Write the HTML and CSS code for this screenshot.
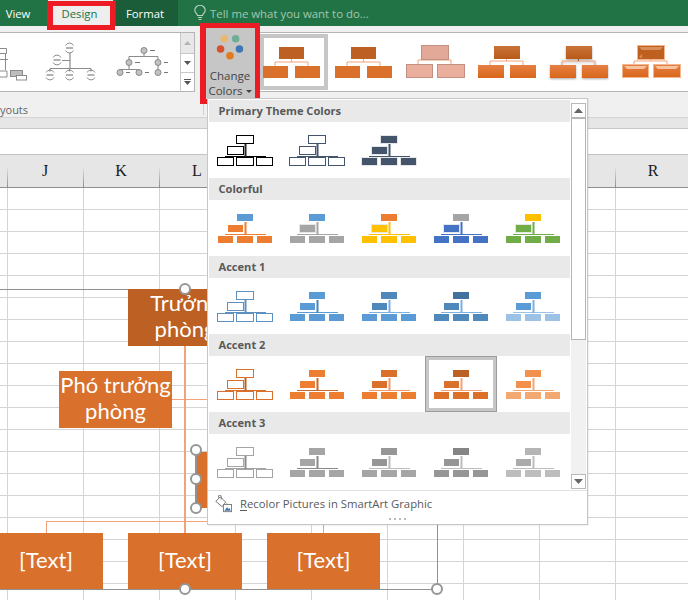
FILE: index.html
```html
<!DOCTYPE html>
<html lang="en">
<head>
<meta charset="utf-8">
<title>SmartArt Change Colors</title>
<link rel="stylesheet" href="styles.css">
</head>
<body>
<svg class="defs" width="0" height="0" aria-hidden="true">
  <symbol id="org" viewBox="0 0 56 31">
    <rect class="o-line" x="8" y="21" width="41" height="1"/>
    <rect class="o-vert" x="27.5" y="9" width="2" height="13"/>
    <rect class="o-top" x="19.5" y=".5" width="17" height="8"/>
    <rect class="o-asst" x="10.5" y="11.5" width="16" height="8"/>
    <rect class="o-bot" x=".5" y="22.5" width="16" height="8"/>
    <rect class="o-bot" x="19.5" y="22.5" width="17" height="8"/>
    <rect class="o-bot" x="39.5" y="22.5" width="16" height="8"/>
  </symbol>
  <linearGradient id="gTop" x1="0" y1="0" x2="0" y2="1"><stop offset="0" stop-color="#c9733a"/><stop offset="1" stop-color="#b85a18"/></linearGradient>
  <linearGradient id="gBot" x1="0" y1="0" x2="0" y2="1"><stop offset="0" stop-color="#e58044"/><stop offset="1" stop-color="#d9661a"/></linearGradient>
</svg>

<div class="app">
  <div class="tabbar">
    <span class="tab">View</span>
    <span class="tab tab-design">Design</span>
    <span class="tab tab-format">Format</span>
    <div class="tellme">
      <svg class="bulb" width="12" height="16" viewBox="0 0 12 16"><path d="M3.500 10.500C3 8.500 .8 7.800 .8 5.300a5.200 5 0 0 1 10.400 0c0 2.500-2.200 3.200-2.700 5.200zM4 12.500h4M4.500 14.500h3" fill="none" stroke="#b9d3c4" stroke-width="1.100"/></svg>
      <span>Tell me what you want to do...</span>
    </div>
  </div>

  <div class="ribbon">
    <div class="ribbon-row">
      <div class="layouts">
        <svg class="layout-art" width="180" height="58" viewBox="0 33 180 58">
          <g fill="none" stroke="#8c8c8c">
            <path d="M0 48.500h6.500v5H0M0 59.500h8M5.500 54v16M0 71h7v6H0"/>
            <rect x="10.500" y="70.500" width="12" height="6" fill="#bdbdbd"/>
            <rect x="16.500" y="75.500" width="10" height="4.500" fill="#fff"/>
            <path d="M70 53v15M50 68.500h41M50 68.500v3M69.500 68.500v3M91 68.500v3M62 60.500h8" stroke-width="1.200"/>
            <path d="M65.500 45.500a4.500 4.500 0 0 1 8 0M65.500 50.500a4.500 4.500 0 0 0 8 0M53 57.500a4.500 4.500 0 0 1 8 0M53 62.500a4.500 4.500 0 0 0 8 0M46 72.500a4.500 4.500 0 0 1 8 0M46 77.500a4.500 4.500 0 0 0 8 0M65.500 72.500a4.500 4.500 0 0 1 8 0M65.500 77.500a4.500 4.500 0 0 0 8 0M87 72.500a4.500 4.500 0 0 1 8 0M87 77.500a4.500 4.500 0 0 0 8 0"/>
            <path d="M66 48h7M53.500 60h7M46.500 75h7M66 75h7M87.500 75h7" stroke="#666"/>
            <path d="M144 54v2.500M129 56.500h29M129 56.500v3M158 56.500v3M129 65v4M120 69.500h19M120 69.500v1M139 69.500v1M158 65v5" stroke="#8c8c8c" stroke-width="1.100"/>
            <path d="M150 50.500h5M135 62.500h5M164 62.500h4M126 72.500h4M145 72.500h4M164 72.500h4" stroke="#777"/>
          </g>
          <g fill="#c2c2c2" stroke="#888">
            <circle cx="144" cy="50.500" r="3"/><circle cx="129" cy="62.500" r="3"/><circle cx="158" cy="62.500" r="3"/>
            <circle cx="120" cy="72.500" r="3"/><circle cx="139" cy="72.500" r="3"/><circle cx="158" cy="72.500" r="3"/>
          </g>
        </svg>
        <div class="gallery-scroll">
          <span class="gs-btn gs-up"><svg width="7" height="4"><path d="M0 4h7L3.500 0z" fill="#b5b5b5"/></svg></span>
          <span class="gs-btn"><svg width="7" height="4"><path d="M0 0h7L3.500 4z" fill="#555"/></svg></span>
          <span class="gs-btn gs-more"><svg width="7" height="6"><path d="M0 0h7v1H0zM0 2h7L3.500 6z" fill="#555"/></svg></span>
        </div>
      </div>
      <div class="change-colors">
        <svg width="32" height="36" viewBox="0 0 32 36">
          <circle cx="10" cy="6" r="4" fill="#e9b86d"/><circle cx="22" cy="6" r="4" fill="#70ad94"/>
          <circle cx="6" cy="17" r="4" fill="#d5522f"/><circle cx="26" cy="17" r="4" fill="#4176b4"/>
          <circle cx="16" cy="24" r="4" fill="#e27a1e"/>
        </svg>
        <span class="cc-label">Change</span>
        <span class="cc-label">Colors <i class="caret"></i></span>
      </div>
      <div class="styles">
        <svg class="style" width="72" height="58" viewBox="0 0 72 58"><rect x="2" y="3" width="64" height="52" fill="none" stroke="#c6c6c6" stroke-width="4"/><path class="peach" d="M15 34v-5h33v5M31.500 29v-3"/><rect x="19" y="14" width="25" height="12" fill="#bc6123"/><rect x="3" y="33" width="25" height="12" fill="#d9702c"/><rect x="35" y="33" width="25" height="12" fill="#d9702c"/></svg>
        <svg class="style" width="72" height="58" viewBox="0 0 72 58"><path class="peach" d="M15 34v-5h33v5M31.500 29v-3"/><rect x="19" y="14" width="25" height="12" fill="#bc6123"/><rect x="3" y="33" width="25" height="12" fill="#d9702c"/><rect x="35" y="33" width="25" height="12" fill="#d9702c"/></svg>
        <svg class="style" width="72" height="58" viewBox="1 0 72 58"><path class="peach" d="M15 32v-5h33v5M31.500 27v-3"/><rect x="18.500" y="12.500" width="27" height="14" fill="#e2a999" stroke="#c19083"/><rect x="3.500" y="31.500" width="26" height="13" fill="#eab09d" stroke="#c19083"/><rect x="34.500" y="31.500" width="27" height="13" fill="#eab09d" stroke="#c19083"/></svg>
        <svg class="style" width="72" height="58" viewBox="1 0 72 58"><path class="peach" d="M15 33v-5h33v5M31.500 28v-3"/><rect x="19" y="13" width="26" height="13" fill="url(#gTop)"/><rect x="3" y="32" width="26" height="13" fill="url(#gBot)"/><rect x="35" y="32" width="26" height="13" fill="url(#gBot)"/></svg>
        <svg class="style shadowed" width="72" height="58" viewBox="1 0 72 58"><path class="peach" d="M15 33v-5h33v5"/><path d="M31.500 28v-3" stroke="#9a5a30" fill="none"/><rect x="19" y="13" width="26" height="13" fill="url(#gTop)"/><rect x="3" y="32" width="26" height="13" fill="url(#gBot)"/><rect x="35" y="32" width="26" height="13" fill="url(#gBot)"/></svg>
        <svg class="style" width="72" height="58" viewBox="1 0 72 58"><path class="peach" d="M15 32v-4h33v4M31.500 28v-2"/><rect x="18.500" y="12.500" width="27" height="14" fill="#bd6020" stroke="#f3b68f"/><path d="M20 14h24l-3 3H23zM20 24l3-3v4z" fill="#d98e5c"/><rect x="3.500" y="31.500" width="26" height="13" fill="url(#gBot)" stroke="#f3b68f"/><path d="M5 33h23l-3 3H8z" fill="#f5c3a0"/><rect x="34.500" y="31.500" width="27" height="13" fill="url(#gBot)" stroke="#f3b68f"/><path d="M36 33h24l-3 3H39z" fill="#f5c3a0"/></svg>
      </div>
    </div>
    <div class="ribbon-foot"><span class="group-name">youts</span><span class="group-sep"></span></div>
  </div>

  <div class="band"></div>
  <div class="formula"></div>

  <div class="col-heads">
    <span class="col">J</span><span class="col">K</span><span class="col">L</span><span class="col">M</span><span class="col">N</span><span class="col">O</span><span class="col">P</span><span class="col">Q</span><span class="col">R</span>
  </div>

  <div class="sheet">
    <div class="sel-top"></div>
    <div class="sel-bottom"></div>
    <div class="sel-right"></div>
    <div class="sel-left"></div>
    <div class="conn conn-v1"></div>
    <div class="conn conn-h1"></div>
    <div class="conn conn-h2"></div>
    <div class="conn conn-d1"></div>
    <div class="conn conn-d2"></div>
    <div class="node node-head"><span>Trưởng<br>phòng</span></div>
    <div class="node node-deputy"><span>Phó trưởng<br>phòng</span></div>
    <div class="node node-asst"></div>
    <div class="node node-b1">[Text]</div>
    <div class="node node-b2">[Text]</div>
    <div class="node node-b3">[Text]</div>
    <i class="handle h-a"></i><i class="handle h-b"></i><i class="handle h-f"></i><i class="handle h-c"></i><i class="handle h-d"></i><i class="handle h-e"></i>
  </div>

  <span class="mark mark-design"></span>
  <span class="mark mark-colors"></span>

  <div class="panel">
    <div class="panel-main">
      <div class="list">
        <div class="sec-title">Primary Theme Colors</div>
        <div class="sec-row">
          <svg class="ic pt1"><use href="#org"/></svg>
          <svg class="ic pt2"><use href="#org"/></svg>
          <svg class="ic pt3"><use href="#org"/></svg>
        </div>
        <div class="sec-title">Colorful</div>
        <div class="sec-row">
          <svg class="ic c1"><use href="#org"/></svg>
          <svg class="ic c2"><use href="#org"/></svg>
          <svg class="ic c3"><use href="#org"/></svg>
          <svg class="ic c4"><use href="#org"/></svg>
          <svg class="ic c5"><use href="#org"/></svg>
        </div>
        <div class="sec-title">Accent 1</div>
        <div class="sec-row">
          <svg class="ic a11"><use href="#org"/></svg>
          <svg class="ic a12"><use href="#org"/></svg>
          <svg class="ic a13"><use href="#org"/></svg>
          <svg class="ic a14"><use href="#org"/></svg>
          <svg class="ic a15"><use href="#org"/></svg>
        </div>
        <div class="sec-title">Accent 2</div>
        <div class="sec-row">
          <svg class="ic a21"><use href="#org"/></svg>
          <svg class="ic a22"><use href="#org"/></svg>
          <svg class="ic a23"><use href="#org"/></svg>
          <div class="picked"><svg class="ic a24"><use href="#org"/></svg></div>
          <svg class="ic a25"><use href="#org"/></svg>
        </div>
        <div class="sec-title">Accent 3</div>
        <div class="sec-row">
          <svg class="ic a31"><use href="#org"/></svg>
          <svg class="ic a32"><use href="#org"/></svg>
          <svg class="ic a33"><use href="#org"/></svg>
          <svg class="ic a34"><use href="#org"/></svg>
          <svg class="ic a35"><use href="#org"/></svg>
        </div>
      </div>
      <div class="vscroll">
        <span class="vs-btn"><svg width="9" height="5"><path d="M0 5h9L4.500 0z" fill="#666"/></svg></span>
        <span class="vs-thumb"></span>
        <span class="vs-track"></span>
        <span class="vs-btn vs-btn-down"><svg width="9" height="5"><path d="M0 0h9L4.500 5z" fill="#666"/></svg></span>
      </div>
    </div>
    <div class="recolor">
      <svg width="18" height="18" viewBox="0 0 20 20">
        <path d="M2 7l5-5 6 6-4 5z" fill="#fff" stroke="#666"/>
        <path d="M5 3V1.500a1.500 1.500 0 0 1 3 0V5" fill="none" stroke="#666"/>
        <path d="M14 9c1 1.500 1.500 2 1.500 3" fill="none" stroke="#c99a4a"/>
        <rect x="10.500" y="10.500" width="9" height="8" fill="#fff" stroke="#777"/>
        <path d="M11.500 17.500l3-4 2 2 1-1 1 3z" fill="#3f78b5"/>
      </svg>
      <span><u>R</u>ecolor Pictures in SmartArt Graphic</span>
    </div>
    <div class="grip"><i></i><i></i><i></i><i></i></div>
  </div>
</div>
</body>
</html>
```
FILE: styles.css
```css
* { box-sizing: border-box; }
html, body { margin: 0; padding: 0; }
body { font-family: "Open Sans", "Liberation Sans", sans-serif; background: #fff; }
.defs { position: absolute; }

.app { position: relative; width: 688px; height: 600px; overflow: hidden; display: flex; flex-direction: column; }

/* title tabs */
.tabbar { flex: none; height: 26px; background: #217346; display: flex; align-items: stretch; font-size: 11.300px; color: #fff; }
.tab { display: flex; align-items: center; justify-content: center; }
.tab:first-child { width: 36px; }
.tab-design { width: 65px; margin-left: 12px; padding-right: 2px; background: #eeeeee; color: #217346; }
.tab-format { width: 62px; margin-left: 3px; padding-right: 4px; background: #1b5c39; }
.tellme { display: flex; align-items: center; gap: 4px; margin-left: 16px; color: #a4c6b1; font-size: 11.400px; }

/* ribbon */
.ribbon { flex: none; height: 92px; background: #f0f0f0; border-bottom: 1px solid #d4d4d4; display: flex; flex-direction: column; }
.ribbon-row { display: flex; height: 66px; padding-top: 6px; }
.layouts { width: 195px; height: 60px; display: flex; background: #fff; border: solid #b4b4b4; border-width: 1px 1px 1px 0; }
.layout-art { flex: none; }
.gallery-scroll { flex: none; width: 14px; display: flex; flex-direction: column; border-left: 1px solid #c8c8c8; }
.gs-btn { flex: 1; display: flex; align-items: center; justify-content: center; border-bottom: 1px solid #c8c8c8; background: #fff; }
.gs-btn:last-child { border-bottom: 0; }
.gs-up { background: #e8e8e8; flex: 1.150; }
.change-colors { flex: none; width: 50px; height: 70px; margin: -4px 0 0 10px; background: #c6c6c6; display: flex; flex-direction: column; align-items: center; color: #444; font-size: 11.500px; line-height: 15px; padding-top: 5px; }
.change-colors svg { margin-bottom: 1px; }
.cc-label { white-space: nowrap; }
.caret { display: inline-block; vertical-align: middle; width: 0; height: 0; border: 3px solid transparent; border-top-color: #444; border-bottom: 0; }
.styles { flex: 1; margin-left: 5px; height: 60px; display: flex; background: #fff; border: solid #b4b4b4; border-width: 1px 0; overflow: hidden; }
.style { flex: none; }
.shadowed { filter: drop-shadow(0 1px 1px rgba(60, 60, 60, .45)); }
.peach { fill: none; stroke: #f4a27b; stroke-width: 1; }
.ribbon-foot { flex: 1; display: flex; align-items: flex-start; justify-content: space-between; padding-top: 10px; width: 204px; }
.group-name { font-size: 11px; line-height: 15px; color: #666; }
.group-sep { width: 1px; height: 15px; margin-top: -2px; background: #d0d0d0; }

.band { flex: none; height: 11px; background: #e6e6e6; border-bottom: 1px solid #c8c8c8; }
.formula { flex: none; height: 26px; background: #fff; border-bottom: 1px solid #c4c4c4; }

/* sheet */
.col-heads { flex: none; height: 32px; padding-left: 7px; background: #e6e6e6; display: flex; }
.col { flex: none; width: 76px; display: flex; align-items: center; justify-content: center; font: 16px/1 "Liberation Serif", serif; color: #1a1a1a; background: linear-gradient(to bottom, #e6e6e6, #8f8f8f) left bottom / 1px 21px no-repeat; }
.sheet { flex: 1; position: relative; background-color: #fff;
  background-image: linear-gradient(to right, #d4d4d4 1px, transparent 1px), linear-gradient(to bottom, #d4d4d4 1px, transparent 1px);
  background-size: 76px 22px; background-position: 7px 0; }
.sheet::before { content: ""; position: absolute; left: 0; right: 0; top: 0; height: 1px; background: #8f8f8f; }

/* diagram canvas: y values relative to sheet top (187) */
.sel-top { position: absolute; left: 0; top: 102px; width: 300px; height: 1px; background: #919191; }
.sel-bottom { position: absolute; left: 0; top: 402px; width: 437px; height: 1px; background: #919191; }
.sel-right { position: absolute; left: 437px; top: 300px; width: 1px; height: 102px; background: #919191; }
.sel-left { position: absolute; left: 195px; top: 263px; width: 2px; height: 58px; background: #919191; }
.conn { position: absolute; background: #f2a27c; }
.conn-v1 { left: 184px; top: 159px; width: 2px; height: 188px; }
.conn-h1 { left: 46px; top: 334px; width: 280px; height: 1px; }
.conn-h2 { left: 172px; top: 212px; width: 40px; height: 1px; }
.conn-d1 { left: 46px; top: 334px; width: 1px; height: 12px; }
.conn-d2 { left: 323px; top: 334px; width: 1px; height: 12px; }
.node { position: absolute; display: flex; align-items: center; justify-content: center; padding-bottom: 3px; background: #d9702c; color: #fff; font-family: Lato, "Open Sans", sans-serif; font-size: 22px; line-height: 26px; text-align: center; }
.node-head { left: 128px; top: 102px; width: 114px; height: 57px; background: #bc6123; }
.node-deputy { left: 59px; top: 184px; width: 113px; height: 57px; white-space: nowrap; }
.node-asst { left: 197px; top: 265px; width: 114px; height: 56px; }
.node-b1 { left: -11px; top: 346px; width: 114px; height: 56px; }
.node-b2 { left: 128px; top: 346px; width: 114px; height: 56px; }
.node-b3 { left: 267px; top: 346px; width: 113px; height: 56px; }
.handle { position: absolute; width: 12px; height: 12px; border-radius: 50%; background: #fff; border: 2.500px solid #969696; }
.h-a { left: 179px; top: 96px; }
.h-b { left: 190px; top: 257px; }
.h-f { left: 190px; top: 286px; }
.h-c { left: 190px; top: 315px; }
.h-d { left: 179px; top: 396px; }
.h-e { left: 431px; top: 396px; }

/* annotations */
.mark { position: absolute; border-style: solid; border-color: #ed1c24; border-width: 5px 5px 5px 6px; }
.mark-design { left: 47px; top: 1px; width: 68px; height: 29px; }
.mark-colors { left: 200px; top: 23px; width: 60px; height: 81px; }

/* dropdown */
.panel { position: absolute; left: 207px; top: 98px; width: 381px; height: 427px; background: #fff; border: 1.500px solid #c6c6c6; display: flex; flex-direction: column; box-shadow: 1px 1px 1px rgba(0,0,0,.05); }
.panel-main { display: flex; height: 390px; padding-top: .500px; }
.list { width: 361px; height: 390px; overflow: hidden; margin-left: .500px; }
.sec-title { height: 22px; background: #e9e9e9; padding-left: 10px; font-size: 11.100px; font-weight: 700; line-height: 22px; color: #595959; }
.sec-row { height: 56px; display: flex; align-items: flex-start; }
.ic { flex: none; width: 56px; height: 31px; margin: 13px 8px 0; }
.picked { flex: none; width: 72px; height: 56px; border: 4px solid #c6c6c6; outline: 1px solid #9c9c9c; outline-offset: -1px; }
.picked .ic { margin: 9px 4px 0; display: block; }

/* org chart parts */
.o-top { fill: var(--t); stroke: var(--st, #fff); }
.o-asst { fill: var(--a); stroke: var(--sa, #fff); }
.o-bot { fill: var(--b); stroke: var(--sb, #fff); }
.o-line { fill: var(--l); }
.o-vert { fill: var(--v, var(--l)); }

.pt1 { --t:#fff; --a:#fff; --b:#fff; --st:#000; --sa:#000; --sb:#000; --l:#000; --v:#262626; }
.pt2 { --t:#fff; --a:#fff; --b:#fff; --st:#44546a; --sa:#44546a; --sb:#44546a; --l:#44546a; }
.pt3 { --t:#44546a; --a:#44546a; --b:#44546a; --st:#e7e6e6; --sa:#e7e6e6; --sb:#e7e6e6; --l:#44546a; }
.c1 { --t:#5b9bd5; --a:#ed7d31; --b:#ed7d31; --l:#ed7d31; }
.c2 { --t:#5b9bd5; --a:#a5a5a5; --b:#a5a5a5; --sa:#e7e6e6; --l:#a5a5a5; }
.c3 { --t:#ed7d31; --a:#ffc000; --b:#ffc000; --sa:#e7e6e6; --l:#ffc000; }
.c4 { --t:#a5a5a5; --a:#4472c4; --b:#4472c4; --sa:#e7e6e6; --l:#4472c4; }
.c5 { --t:#ffc000; --a:#70ad47; --b:#70ad47; --sa:#e7e6e6; --l:#70ad47; }
.a11 { --t:#fff; --a:#fff; --b:#fff; --st:#5b90bf; --sa:#5b90bf; --sb:#5b90bf; --l:#5b90bf; }
.a12 { --t:#5b9bd5; --a:#5b9bd5; --b:#5b9bd5; --l:#5b9bd5; --v:#4a83b6; }
.a13 { --t:#4f88bb; --a:#4f88bb; --b:#5b9bd5; --l:#7db0de; }
.a14 { --t:#41719c; --a:#4f88bb; --b:#4f88bb; --l:#7db0de; }
.a15 { --t:#5b9bd5; --a:#5b9bd5; --b:#9cc3e5; --l:#9cc3e5; --v:#7db0de; }
.a21 { --t:#fff; --a:#fff; --b:#fff; --st:#d9702c; --sa:#d9702c; --sb:#d9702c; --l:#d9702c; --v:#bc6123; }
.a22 { --t:#ed7d31; --a:#ed7d31; --b:#ed7d31; --l:#c5692c; }
.a23 { --t:#d9702c; --a:#d9702c; --b:#ed7d31; --l:#f19b6a; }
.a24 { --t:#bc6123; --a:#d9702c; --b:#dd7029; --l:#f4a27b; }
.a25 { --t:#f1914d; --a:#f1914d; --b:#f4a871; --l:#f4a871; }
.a31 { --t:#fff; --a:#fff; --b:#fff; --st:#a5a5a5; --sa:#a5a5a5; --sb:#a5a5a5; --l:#a5a5a5; --v:#8a8a8a; }
.a32 { --t:#a5a5a5; --a:#a5a5a5; --b:#a5a5a5; --l:#8a8a8a; }
.a33 { --t:#969696; --a:#969696; --b:#a5a5a5; --l:#bdbdbd; }
.a34 { --t:#858585; --a:#969696; --b:#969696; --l:#bdbdbd; }
.a35 { --t:#b5b5b5; --a:#ababab; --b:#bdbdbd; --l:#bdbdbd; }

.vscroll { flex: none; width: 15px; margin: 3px 0 0 1px; display: flex; flex-direction: column; background: #f1f1f1; height: 386px; }
.vs-btn { flex: none; height: 15px; background: #fff; border: 1.500px solid #b9b9b9; display: flex; align-items: center; justify-content: center; }
.vs-thumb { flex: none; height: 222px; background: #fff; border: 1.500px solid #b4b4b4; }
.vs-track { flex: 1; }

.recolor { flex: none; height: 27px; margin-top: 1px; border-top: 1px solid #e2e2e2; display: flex; align-items: center; gap: 8px; padding: 0 0 1px 6px; font-size: 11.300px; color: #595959; }
.recolor u { text-underline-offset: 2px; }
.grip { display: flex; gap: 3px; justify-content: flex-end; margin-top: 1px; padding-right: 181px; }
.grip i { width: 2px; height: 2px; background: #b8b8b8; }
```
